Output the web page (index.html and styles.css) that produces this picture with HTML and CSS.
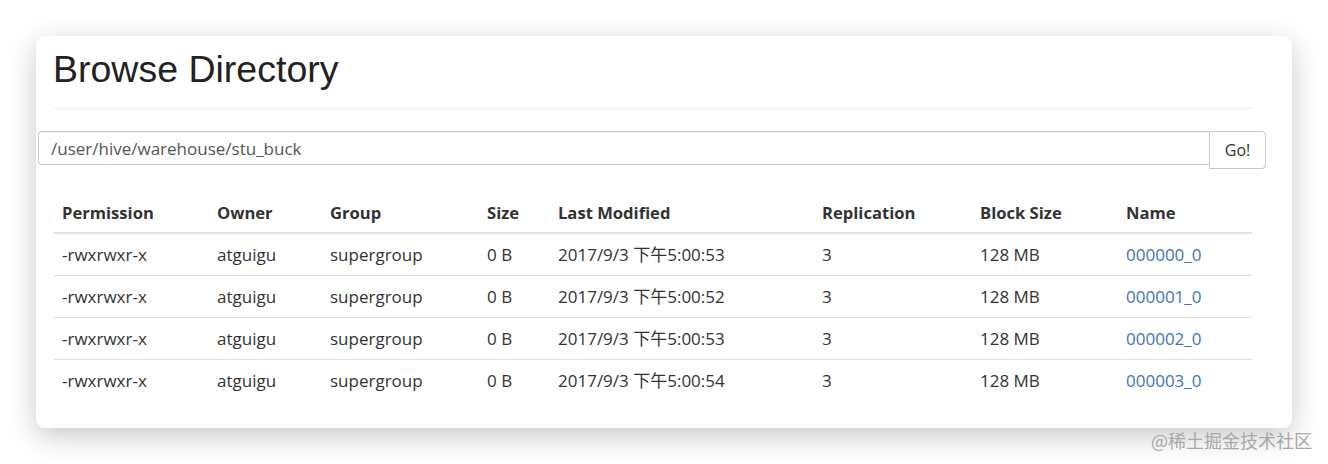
FILE: index.html
```html
<!DOCTYPE html>
<html>
<head>
<meta charset="utf-8">
<link rel="stylesheet" href="styles.css">
</head>
<body>
<div class="card">
  <h1 class="title">Browse Directory</h1>
  <hr class="rule">
  <div class="search">
    <input class="path" type="text" value="/user/hive/warehouse/stu_buck">
    <button class="go">Go!</button>
  </div>
  <table class="listing">
    <colgroup>
      <col class="c1"><col class="c2"><col class="c3"><col class="c4"><col class="c5"><col class="c6"><col class="c7"><col class="c8">
    </colgroup>
    <thead>
      <tr><th>Permission</th><th>Owner</th><th>Group</th><th>Size</th><th>Last Modified</th><th>Replication</th><th>Block Size</th><th>Name</th></tr>
    </thead>
    <tbody>
      <tr><td>-rwxrwxr-x</td><td>atguigu</td><td>supergroup</td><td>0 B</td><td>2017/9/3 下午5:00:53</td><td>3</td><td>128 MB</td><td><a href="#">000000_0</a></td></tr>
      <tr><td>-rwxrwxr-x</td><td>atguigu</td><td>supergroup</td><td>0 B</td><td>2017/9/3 下午5:00:52</td><td>3</td><td>128 MB</td><td><a href="#">000001_0</a></td></tr>
      <tr><td>-rwxrwxr-x</td><td>atguigu</td><td>supergroup</td><td>0 B</td><td>2017/9/3 下午5:00:53</td><td>3</td><td>128 MB</td><td><a href="#">000002_0</a></td></tr>
      <tr><td>-rwxrwxr-x</td><td>atguigu</td><td>supergroup</td><td>0 B</td><td>2017/9/3 下午5:00:54</td><td>3</td><td>128 MB</td><td><a href="#">000003_0</a></td></tr>
    </tbody>
  </table>
</div>
<div class="mark">@稀土掘金技术社区</div>
</body>
</html>
```
FILE: styles.css
```css
html, body {
  margin: 0;
  padding: 0;
  background: #ffffff;
}
body {
  font-family: "Open Sans", "Noto Sans CJK SC", sans-serif;
  color: #333;
  width: 1328px;
  height: 464px;
  overflow: hidden;
}
.card {
  margin: 36px 0 0 36px;
  width: 1256px;
  height: 392px;
  box-sizing: border-box;
  background: #fff;
  border-radius: 9px;
  box-shadow: 0 8px 28px rgba(0, 0, 0, 0.22);
  padding: 0 40px 0 18px;
  display: flex;
  flex-direction: column;
}
.title {
  margin: 12px 0 0 -1px;
  font-family: "Liberation Sans", Arial, sans-serif;
  font-weight: 400;
  font-size: 37.5px;
  line-height: 42px;
  color: #222;
}
.rule {
  margin: 18px 0 0 0;
  border: 0;
  border-top: 1px solid #eeeeee;
  height: 0;
}
.search {
  display: flex;
  align-items: flex-start;
  margin: 22px -14px 0 -16px;
}
.path {
  flex: 1;
  height: 34px;
  box-sizing: border-box;
  border: 1px solid #c8c8c8;
  border-right: 0;
  border-radius: 4px 0 0 4px;
  padding: 0 12px;
  font-family: "Open Sans", sans-serif;
  font-size: 17px;
  color: #555;
  box-shadow: inset 0 1px 1px rgba(0,0,0,0.05);
  outline: none;
}
.go {
  width: 57px;
  height: 38px;
  box-sizing: border-box;
  border: 1px solid #c8c8c8;
  border-radius: 0 4px 4px 0;
  background: #fff;
  font-family: "Open Sans", sans-serif;
  font-size: 16px;
  color: #333;
  padding: 0;
}
.listing {
  margin-top: 23px;
  width: 1198px;
  border-collapse: collapse;
  table-layout: fixed;
  font-size: 17px;
}
.c1 { width: 155px; }
.c2 { width: 113px; }
.c3 { width: 157px; }
.c4 { width: 71px; }
.c5 { width: 264px; }
.c6 { width: 158px; }
.c7 { width: 146px; }
.c8 { width: 134px; }
.listing th {
  text-align: left;
  font-weight: 700;
  font-size: 16.6px;
  padding: 9px 8px 7px;
  line-height: 24px;
  border-bottom: 2px solid #e3e3e3;
  color: #333;
}
.listing td {
  padding: 8px 8px;
  line-height: 24px;
  height: 25px;
  border-top: 1px solid #dedede;
  color: #333;
  white-space: nowrap;
}
.listing tbody tr:first-child td {
  border-top: 0;
}
.listing a {
  color: #3f75b5;
  text-decoration: none;
}
.mark {
  text-align: right;
  padding-right: 16px;
  margin-top: 1px;
  font-family: "Noto Sans CJK SC", sans-serif;
  font-size: 18px;
  line-height: 22px;
  color: #a8a8a8;
}
```
